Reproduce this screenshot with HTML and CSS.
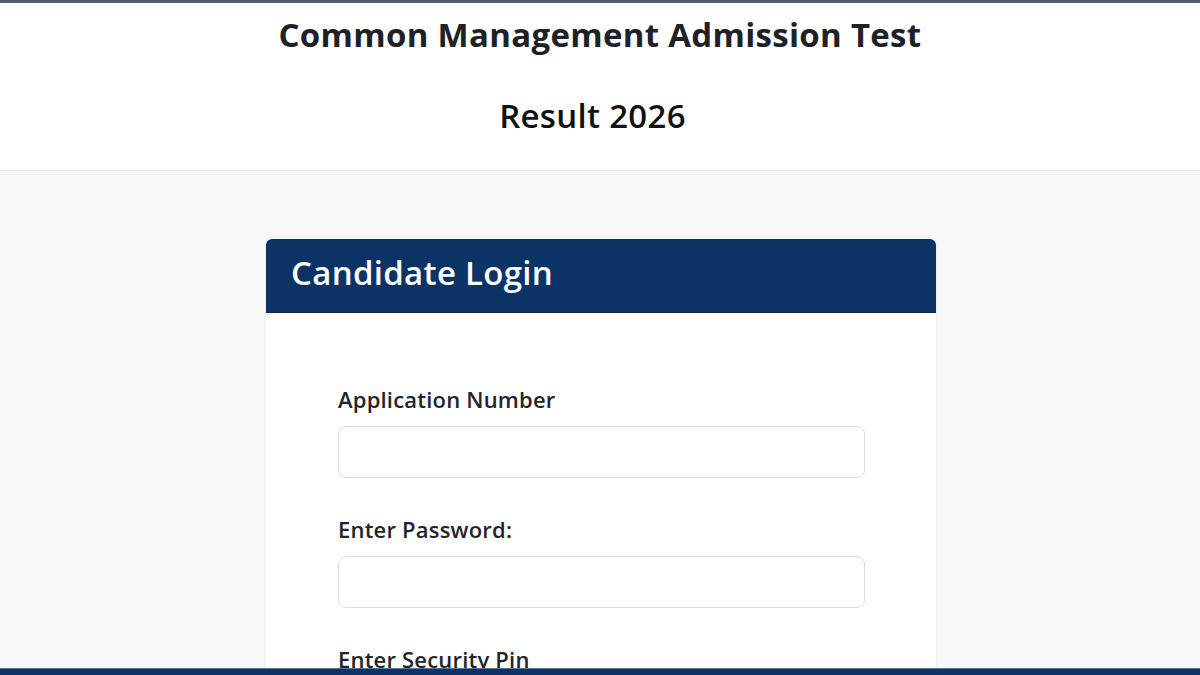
FILE: index.html
```html
<!DOCTYPE html>
<html lang="en">
<head>
<meta charset="utf-8">
<title>CMAT Result 2026</title>
<link rel="stylesheet" href="styles.css">
</head>
<body>
<div class="topline"></div>
<header class="site-header">
  <h1 class="title">Common Management Admission Test</h1>
  <h2 class="subtitle">Result 2026</h2>
</header>
<main class="main">
  <section class="card">
    <div class="card-head">
      <h3 class="card-title">Candidate Login</h3>
    </div>
    <form class="card-body">
      <div class="field">
        <label class="label" for="app">Application Number</label>
        <input class="input" id="app" type="text">
      </div>
      <div class="field">
        <label class="label" for="pwd">Enter Password:</label>
        <input class="input" id="pwd" type="password">
      </div>
      <div class="field">
        <label class="label" for="pin">Enter Security Pin</label>
        <input class="input" id="pin" type="text">
      </div>
    </form>
  </section>
</main>
<footer class="footer-bar"></footer>
</body>
</html>
```

FILE: styles.css
```css
html, body {
  margin: 0;
  padding: 0;
}
body {
  font-family: "Open Sans", "Noto Sans", sans-serif;
  background: #f7f8fa;
  color: #212529;
  height: 675px;
  overflow: hidden;
}
.topline {
  height: 3px;
  background: #4d5e69;
}
.site-header {
  background: #ffffff;
  border-bottom: 1px solid #e3e5e8;
  height: 168px;
  box-sizing: border-box;
  text-align: center;
  padding-top: 13px;
}
.title {
  margin: 0;
  font-size: 33px;
  font-weight: 700;
  letter-spacing: 0.3px;
  line-height: 38px;
  color: #1e2226;
}
.subtitle {
  margin: 43px 0 0;
  padding-right: 15px;
  font-size: 33px;
  font-weight: 600;
  letter-spacing: 0.3px;
  line-height: 38px;
  color: #111;
}
.main {
  display: flex;
  justify-content: center;
  padding-top: 68px;
}
.card {
  width: 670px;
  background: #fff;
  border-radius: 6px 6px 0 0;
  box-shadow: 0 0 4px rgba(0,0,0,0.06);
  margin-left: 2px;
}
.card-head {
  background: #0b3366;
  height: 74px;
  border-radius: 6px 6px 0 0;
  display: flex;
  align-items: center;
  padding-left: 25px;
  border-bottom: 1px solid #0a2a55;
  box-sizing: border-box;
}
.card-title {
  margin: 0;
  color: #fff;
  font-size: 33px;
  font-weight: 600;
  letter-spacing: 0.3px;
  padding-bottom: 6px;
}
.card-body {
  padding: 72px 71px 0 72px;
  display: flex;
  flex-direction: column;
  gap: 37px;
}
.field {
  display: flex;
  flex-direction: column;
}
.label {
  font-size: 22px;
  font-weight: 600;
  letter-spacing: 0.2px;
  line-height: 28px;
  color: #212529;
  margin-bottom: 13px;
}
.input {
  height: 52px;
  box-sizing: border-box;
  border: 1px solid #dcdfe3;
  border-radius: 8px;
  background: #fff;
  font: inherit;
  padding: 0 12px;
}
.footer-bar {
  position: fixed;
  left: 0;
  right: 0;
  bottom: 0;
  height: 6px;
  background: #0b3366;
  border-top: 1px solid #5a7894;
}
```
